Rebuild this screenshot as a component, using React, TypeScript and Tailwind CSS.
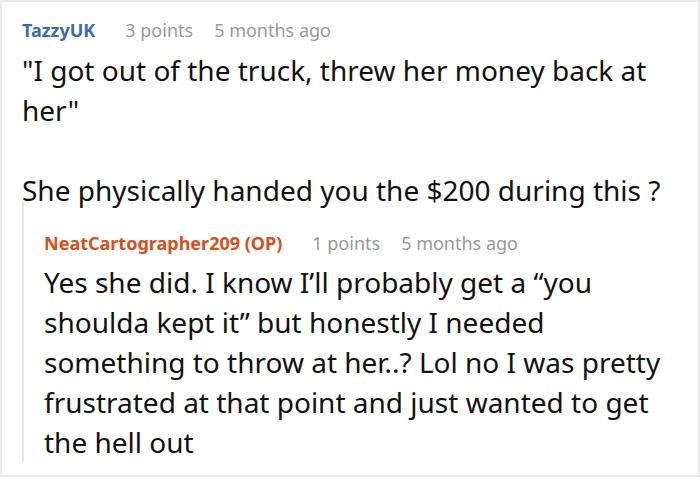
import React from 'react';

const font = { fontFamily: '"Noto Sans", "Open Sans", sans-serif' };

export default function App() {
  return (
    <div className="h-[478px] w-[700px] bg-white" style={font}>
      <div className="h-[477px] w-full border-2 border-[#ebebeb] px-[20px] pt-[16px]">
        {/* top comment */}
        <div className="flex h-[24px] items-center text-[18px] leading-[24px]">
          <span className="font-bold text-[#3b6ab5]">TazzyUK</span>
          <span className="ml-[30px] text-[#999999]">3 points</span>
          <span className="ml-[21px] text-[#999999]">5 months ago</span>
        </div>
        <div className="mt-[8px] text-[28px] leading-[40px] text-[#111111]">
          "I got out of the truck, threw her money back at her"
          <br />
          <br />
          She physically handed you the $200 during this ?
        </div>

        {/* reply */}
        <div className="-mt-[9px] border-l-2 border-[#e6e6e6] pl-[20px] pt-[30px]">
          <div className="flex h-[24px] items-center text-[18px] leading-[24px]">
            <span className="font-bold text-[#d4501c]">NeatCartographer209 (OP)</span>
            <span className="ml-[30px] text-[#999999]">1 points</span>
            <span className="ml-[21px] text-[#999999]">5 months ago</span>
          </div>
          <div className="mt-[7px] text-[28px] leading-[40px] text-[#111111]">
            Yes she did. I know I’ll probably get a “you shoulda kept it” but honestly I needed
            something to throw at her..? Lol no I was pretty frustrated at that point and just
            wanted to get the hell out
          </div>
        </div>
      </div>
    </div>
  );
}
